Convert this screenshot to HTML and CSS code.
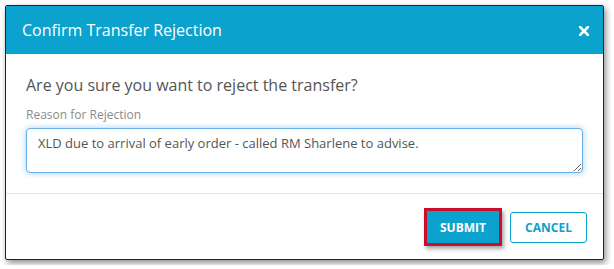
FILE: index.html
```html
<!DOCTYPE html>
<html lang="en">
<head>
    <meta charset="UTF-8">
    <meta name="viewport" content="width=device-width, initial-scale=1.0">
    <title>Confirm Transfer Rejection</title>
    <link rel="stylesheet" href="styles.css">
</head>
<body>
    <div class="modal">
        <div class="modal-header">
            <h3 class="modal-title">Confirm Transfer Rejection</h3>
            <button class="close-btn" aria-label="Close">
                <svg width="10" height="10" viewBox="0 0 10 10">
                    <path d="M1 1 L9 9 M9 1 L1 9" stroke="#fff" stroke-width="2.6" stroke-linecap="square"/>
                </svg>
            </button>
        </div>

        <div class="modal-body">
            <p class="question">Are you sure you want to reject the transfer?</p>
            <label class="field-label" for="reason">Reason for Rejection</label>
            <textarea id="reason" class="reason-input">XLD due to arrival of early order - called RM Sharlene to advise.</textarea>
        </div>

        <div class="modal-footer">
            <button class="btn btn-primary">Submit</button>
            <button class="btn btn-outline">Cancel</button>
        </div>
    </div>
</body>
</html>
```

FILE: styles.css
```css
body {
    font-family: 'Open Sans', 'Liberation Sans', sans-serif;
    background-color: #ffffff;
    margin: 0;
    padding: 5px;
}

.modal {
    width: 597px;
    border: 1px solid #1c2430;
    border-radius: 2px;
    background-color: #fff;
    box-shadow: 2px 3px 6px rgba(0,0,0,0.45);
}

.modal-header {
    background-color: #0ba2cd;
    height: 48px;
    display: flex;
    align-items: center;
    justify-content: space-between;
    padding: 0 14px 0 16px;
}

.modal-title {
    margin: 0;
    color: #fff;
    font-size: 16px;
    font-weight: 400;
}

.close-btn {
    background: none;
    border: none;
    padding: 0;
    margin-top: 1px;
    width: 10px;
    height: 10px;
    display: flex;
    cursor: pointer;
}

.modal-body {
    padding: 20px;
    display: flex;
    flex-direction: column;
}

.question {
    margin: 0 0 10px;
    font-size: 16px;
    line-height: 22px;
    color: #555;
}

.field-label {
    font-size: 12px;
    line-height: 18px;
    color: #8a8a8a;
    margin-bottom: 4px;
}

.reason-input {
    height: 45px;
    box-sizing: border-box;
    width: 557px;
    padding: 5px 11px;
    border: 1px solid #66afe9;
    border-radius: 4px;
    box-shadow: 0 0 6px rgba(102,175,233,0.6);
    font-family: 'Open Sans', 'Liberation Sans', sans-serif;
    font-size: 13px;
    line-height: 18px;
    color: #555;
    resize: vertical;
    outline: none;
}

.modal-footer {
    border-top: 1px solid #e5e5e5;
    padding: 17px 16px 16px;
    display: flex;
    justify-content: flex-end;
    align-items: center;
    gap: 11px;
}

.btn {
    height: 32px;
    padding: 0 10px;
    font-family: 'Open Sans', 'Liberation Sans', sans-serif;
    font-size: 12px;
    font-weight: 700;
    text-transform: uppercase;
    border-radius: 3px;
    cursor: pointer;
}

.btn-primary {
    background-color: #0ba2cd;
    color: #fff;
    border: 1px solid #0ba2cd;
    width: 72px;
    border-radius: 0;
    box-shadow: 0 0 0 3px #c8102e, 2px 3px 4px 3px rgba(0,0,0,0.35);
}

.btn-outline {
    background-color: #fff;
    color: #0ba2cd;
    border: 1px solid #0ba2cd;
    width: 77px;
    height: 31px;
}
```
